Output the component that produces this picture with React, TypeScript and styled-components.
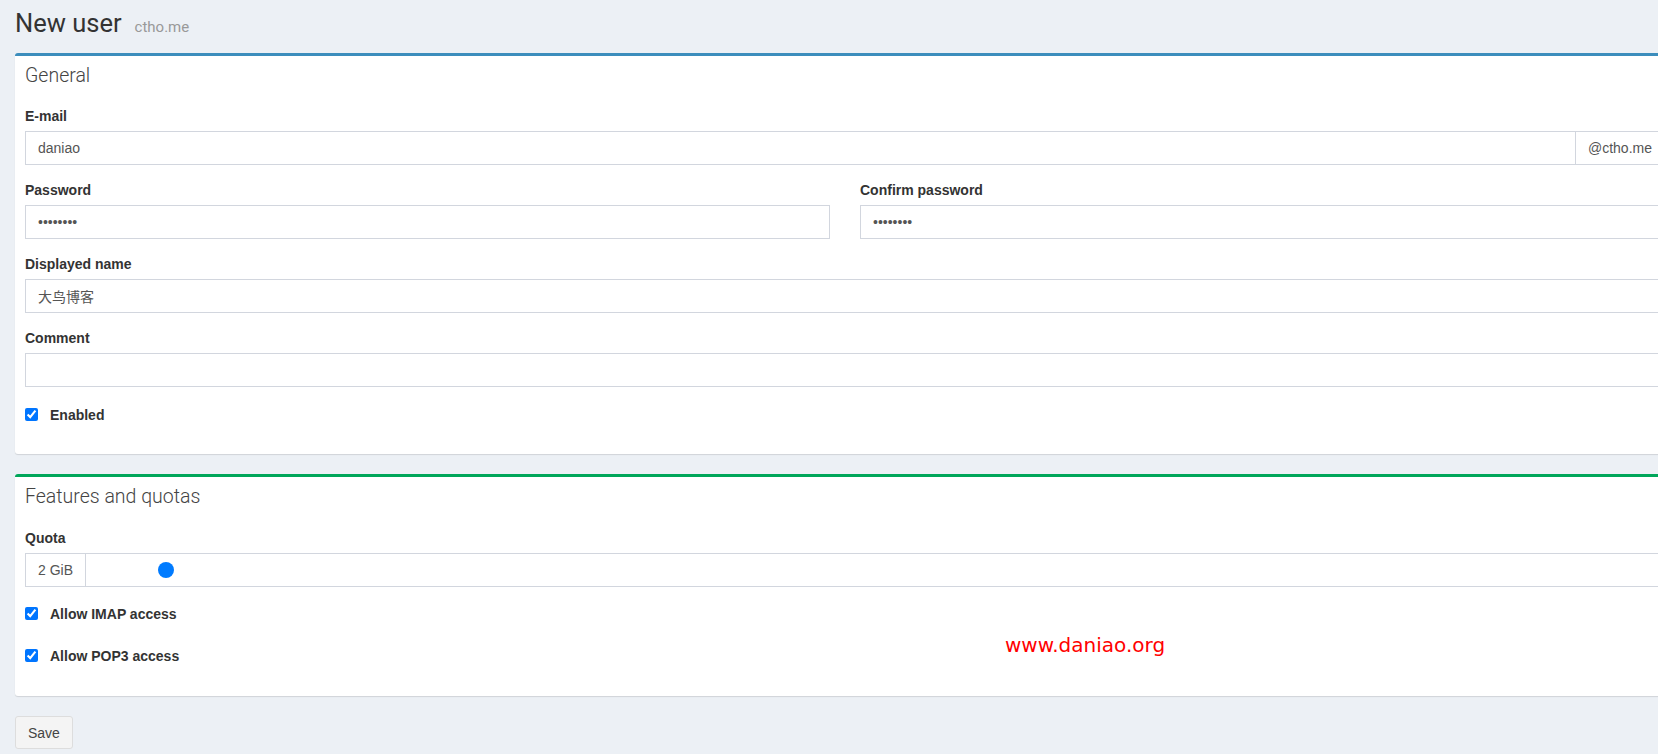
import React from "react";
import styled, { createGlobalStyle } from "styled-components";

const GlobalStyle = createGlobalStyle`
  html, body {
    margin: 0;
    padding: 0;
    background: #ecf0f5;
    overflow: hidden;
  }
  body {
    font-family: "Liberation Sans", Arial, "Noto Sans CJK SC", sans-serif;
    font-size: 14px;
    color: #333;
  }
  * { box-sizing: border-box; }
`

const Page = styled.div`
  width: 1690px;
  padding: 10px 15px 0;
`

const PageTitle = styled.h1`
  margin: 0 0 13px;
  font-family: Roboto, "Noto Sans", sans-serif;
  font-weight: 400;
  font-size: 25.5px;
  line-height: 26px;
  color: #333;
  display: flex;
  align-items: baseline;
`

const Domain = styled.small`
  margin-left: 13px;
  font-size: 15px;
  font-weight: 400;
  color: #999;
`

const Box = styled.section<{ $accent: string }>`
  position: relative;
  background: #fff;
  border-top: 3px solid ${p => p.$accent};
  border-radius: 3px;
  box-shadow: 0 1px 1px rgba(0, 0, 0, 0.12);
  margin-bottom: 20px;
`

const BoxHeader = styled.div`
  padding: 10px;
  height: 40px;
`

const BoxTitle = styled.h3`
  margin: 0;
  font-family: Roboto, "Noto Sans", sans-serif;
  font-weight: 300;
  font-size: 19.5px;
  line-height: 20px;
  color: #444;
`

const BoxBody = styled.div<{ $bottom: number }>`
  padding: 10px 10px ${p => p.$bottom}px;
`

const Field = styled.div<{ $flush?: boolean }>`
  margin-bottom: ${p => (p.$flush ? "0" : "15px")};
`

const Label = styled.label`
  display: block;
  font-weight: bold;
  font-size: 14px;
  line-height: 20px;
  margin-bottom: 5px;
  color: #333;
`

const TextInput = styled.input`
  display: block;
  width: 100%;
  height: 34px;
  padding: 6px 12px;
  border: 1px solid #d2d6de;
  border-radius: 0;
  font-family: "Liberation Sans", Arial, "Noto Sans CJK SC", sans-serif;
  font-size: 14px;
  color: #555;
  background: #fff;
  outline: none;
`

const InputGroup = styled.div`
  display: flex;
  height: 34px;
`

const GroupInput = styled(TextInput)`
  flex: 1;
  width: auto;
`

const Addon = styled.span<{ $side: "left" | "right" }>`
  display: flex;
  align-items: center;
  padding: 0 12px;
  border: 1px solid #d2d6de;
  ${p => (p.$side === "right" ? "border-left: none;" : "")}
  font-size: 14px;
  color: #555;
  background: #fff;
  white-space: nowrap;
`

const SliderBox = styled.div`
  flex: 1;
  display: flex;
  align-items: center;
  padding: 0 10px;
  border: 1px solid #d2d6de;
  border-left: none;
`

const Slider = styled.input`
  -webkit-appearance: none;
  appearance: none;
  width: 100%;
  height: 16px;
  margin: 0;
  background: transparent;
  outline: none;

  &::-webkit-slider-runnable-track {
    height: 16px;
    background: transparent;
  }
  &::-webkit-slider-thumb {
    -webkit-appearance: none;
    width: 16px;
    height: 16px;
    border-radius: 50%;
    background: #007bff;
    border: none;
  }
`

const TwoCols = styled.div`
  display: grid;
  grid-template-columns: 1fr 1fr;
  column-gap: 30px;
`

const CheckList = styled.div<{ $top: number }>`
  display: flex;
  flex-direction: column;
  gap: 22px;
  margin-top: ${p => p.$top}px;
`

const CheckRow = styled.label`
  display: flex;
  align-items: flex-start;
  gap: 12px;
  line-height: 20px;
  font-weight: bold;
  font-size: 14px;
  color: #333;

  input {
    width: 13px;
    height: 13px;
    margin: 3px 0 0;
    accent-color: #0075ff;
  }
`

const SaveButton = styled.button`
  height: 33px;
  padding: 0 12px;
  border: 1px solid #ddd;
  border-radius: 3px;
  background: #f4f4f4;
  color: #444;
  font-family: "Liberation Sans", Arial, sans-serif;
  font-size: 14px;
`

const Watermark = styled.span`
  position: absolute;
  left: 990px;
  top: 158px;
  font-family: "DejaVu Sans", Verdana, sans-serif;
  font-size: 20px;
  line-height: 20px;
  color: #ff0000;
  pointer-events: none;
`

export default function App() {
  return (
    <>
      <GlobalStyle />
      <Page>
        <PageTitle>
          New user<Domain>ctho.me</Domain>
        </PageTitle>

        <Box $accent="#3c8dbc">
          <BoxHeader>
            <BoxTitle>General</BoxTitle>
          </BoxHeader>
          <BoxBody $bottom={29}>
            <Field>
              <Label>E-mail</Label>
              <InputGroup>
                <GroupInput type="text" defaultValue="daniao" />
                <Addon $side="right">@ctho.me</Addon>
              </InputGroup>
            </Field>
            <TwoCols>
              <Field>
                <Label>Password</Label>
                <TextInput type="password" defaultValue="daniao12" />
              </Field>
              <Field>
                <Label>Confirm password</Label>
                <TextInput type="password" defaultValue="daniao12" />
              </Field>
            </TwoCols>
            <Field>
              <Label>Displayed name</Label>
              <TextInput type="text" defaultValue="大鸟博客" />
            </Field>
            <Field $flush>
              <Label>Comment</Label>
              <TextInput type="text" defaultValue="" />
            </Field>
            <CheckList $top={18}>
              <CheckRow>
                <input type="checkbox" defaultChecked />
                Enabled
              </CheckRow>
            </CheckList>
          </BoxBody>
        </Box>

        <Box $accent="#00a65a">
          <BoxHeader>
            <BoxTitle>Features and quotas</BoxTitle>
          </BoxHeader>
          <BoxBody $bottom={30}>
            <Field $flush style={{ paddingTop: 1 }}>
              <Label>Quota</Label>
              <InputGroup>
                <Addon $side="left">2 GiB</Addon>
                <SliderBox>
                  <Slider type="range" min={0} max={50} defaultValue={2} />
                </SliderBox>
              </InputGroup>
            </Field>
            <CheckList $top={17}>
              <CheckRow>
                <input type="checkbox" defaultChecked />
                Allow IMAP access
              </CheckRow>
              <CheckRow>
                <input type="checkbox" defaultChecked />
                Allow POP3 access
              </CheckRow>
            </CheckList>
          </BoxBody>
          <Watermark>www.daniao.org</Watermark>
        </Box>

        <SaveButton type="button">Save</SaveButton>
      </Page>
    </>
  );
}
